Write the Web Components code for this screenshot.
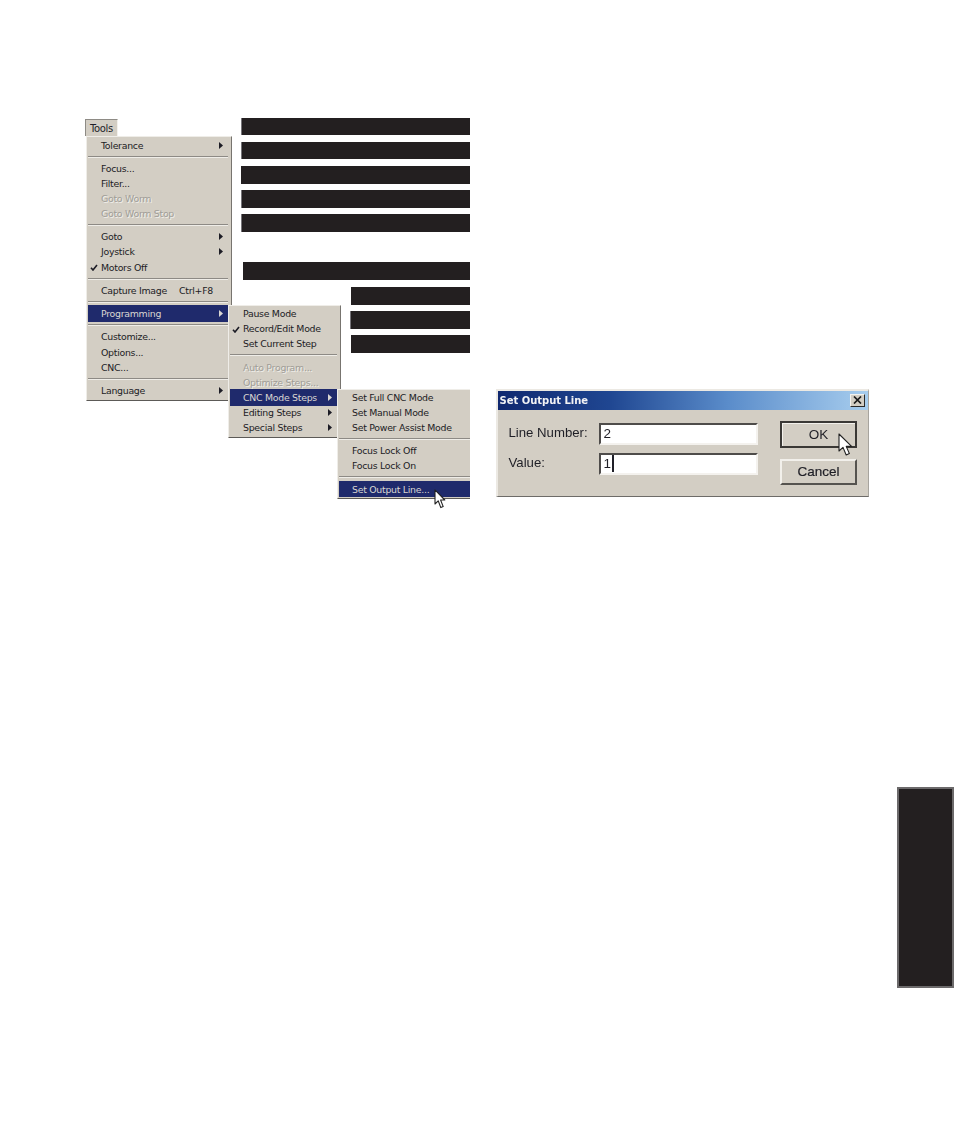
<!DOCTYPE html>
<html lang="en">
<head>
<meta charset="utf-8">
<title>Set Output Line</title>
<style>
html,body{margin:0;padding:0;background:#fff}
</style>
</head>
<body>
<manual-page>
  <menu-cascade slot="figure">
    <redact-bar w="229" h="17" edge style="margin-bottom:1px"></redact-bar>
    <redact-bar w="229" h="17" edge style="margin-bottom:1px"></redact-bar>
    <redact-bar w="229.5" h="18"></redact-bar>
    <redact-bar w="229" h="18" edge></redact-bar>
    <redact-bar w="229" h="18" edge style="margin-bottom:24px"></redact-bar>
    <redact-bar w="227" h="18" style="margin-bottom:1px"></redact-bar>
    <redact-bar w="119" h="18"></redact-bar>
    <redact-bar w="120" h="18" edge></redact-bar>
    <redact-bar w="119" h="18"></redact-bar>

    <menu-tab slot="menus">Tools</menu-tab>

    <pop-menu slot="menus" x="86" y="135.5" w="146" h="265.5" pad="1">
      <menu-row arrow>Tolerance</menu-row>
      <menu-sep></menu-sep>
      <menu-row>Focus...</menu-row>
      <menu-row>Filter...</menu-row>
      <menu-row disabled>Goto Worm</menu-row>
      <menu-row disabled>Goto Worm Stop</menu-row>
      <menu-sep></menu-sep>
      <menu-row arrow>Goto</menu-row>
      <menu-row arrow>Joystick</menu-row>
      <menu-row check>Motors Off</menu-row>
      <menu-sep></menu-sep>
      <menu-row key="Ctrl+F8">Capture Image</menu-row>
      <menu-sep></menu-sep>
      <menu-row arrow active>Programming</menu-row>
      <menu-sep></menu-sep>
      <menu-row>Customize...</menu-row>
      <menu-row>Options...</menu-row>
      <menu-row>CNC...</menu-row>
      <menu-sep></menu-sep>
      <menu-row arrow>Language</menu-row>
    </pop-menu>

    <pop-menu slot="menus" x="228" y="305" w="113" h="133" pad="0">
      <menu-row>Pause Mode</menu-row>
      <menu-row check>Record/Edit Mode</menu-row>
      <menu-row>Set Current Step</menu-row>
      <menu-sep></menu-sep>
      <menu-row disabled>Auto Program...</menu-row>
      <menu-row disabled>Optimize Steps...</menu-row>
      <menu-row arrow active>CNC Mode Steps</menu-row>
      <menu-row arrow>Editing Steps</menu-row>
      <menu-row arrow>Special Steps</menu-row>
    </pop-menu>

    <pop-menu slot="menus" x="337" y="388.5" w="133" h="110.5" pad="0" flush>
      <menu-row>Set Full CNC Mode</menu-row>
      <menu-row>Set Manual Mode</menu-row>
      <menu-row>Set Power Assist Mode</menu-row>
      <menu-sep></menu-sep>
      <menu-row>Focus Lock Off</menu-row>
      <menu-row>Focus Lock On</menu-row>
      <menu-sep></menu-sep>
      <menu-row active thin>Set Output Line...</menu-row>
    </pop-menu>

    <arrow-cursor slot="menus" x="434" y="489"></arrow-cursor>
  </menu-cascade>

  <output-dialog slot="figure"></output-dialog>
  <side-tab slot="tab"></side-tab>
</manual-page>

<script>
function shadow(el, html){
  const r = el.attachShadow({mode:'open'});
  r.innerHTML = html;
  return r;
}

customElements.define('manual-page', class extends HTMLElement{
  constructor(){super();shadow(this,`<style>
    :host{display:flex;flex-direction:column;box-sizing:border-box;width:954px;height:1138px;padding-top:118px;background:#fff;overflow:hidden}
    .figure{display:flex;align-items:flex-end}
    .tab{display:flex;justify-content:flex-end;margin-top:286px}
  </style>
  <div class="figure"><slot name="figure"></slot></div>
  <div class="tab"><slot name="tab"></slot></div>`);}
});

customElements.define('menu-cascade', class extends HTMLElement{
  constructor(){super();shadow(this,`<style>
    :host{display:block;position:relative;width:470px;height:383px;flex:none}
    .bars{display:flex;flex-direction:column;align-items:flex-end;gap:6px}
    .layer{position:absolute;left:0;top:-118px;filter:blur(.35px)}
  </style>
  <div class="bars"><slot></slot></div>
  <div class="layer"><slot name="menus"></slot></div>`);}
});

customElements.define('redact-bar', class extends HTMLElement{
  constructor(){super();shadow(this,`<style>
    :host{display:block;box-sizing:border-box;background:#231f20;flex:none}
    :host([edge]){border-left:1px solid #77757a}
  </style>`);}
  connectedCallback(){
    this.style.width=this.getAttribute('w')+'px';
    this.style.height=this.getAttribute('h')+'px';
  }
});

customElements.define('menu-tab', class extends HTMLElement{
  constructor(){super();shadow(this,`<style>
    :host{position:absolute;left:85px;top:118.5px;width:33px;height:17px;box-sizing:border-box;background:#d3cec4;
      border-top:1px solid #8e8b85;border-left:1px solid #8e8b85;border-right:1px solid #f3f1ec;
      font:10px/17px "DejaVu Sans",sans-serif;letter-spacing:-.35px;color:#1f1f28;padding-left:4px;z-index:1}
  </style><slot></slot>`);}
});

customElements.define('pop-menu', class extends HTMLElement{
  constructor(){super();shadow(this,`<style>
    :host{position:absolute;box-sizing:border-box;background:#d3cec4;display:flex;flex-direction:column;
      padding:0 3px 0 1px;border-top:1px solid #efede8;border-left:1px solid #efede8;
      border-right:1.5px solid #77746f;border-bottom:1.5px solid #5c5a57}
    :host([flush]){border-right:0;padding-right:0}
  </style><slot></slot>`);}
  connectedCallback(){
    const s=this.style,a=n=>this.getAttribute(n)+'px';
    s.left=a('x');s.top=a('y');s.width=a('w');s.height=a('h');s.paddingTop=a('pad');
  }
});

const ARROW='<svg width="4" height="7" viewBox="0 0 4 7"><path d="M0 0L4 3.5L0 7Z" fill="currentColor"/></svg>';
const CHECK='<svg width="8" height="7" viewBox="0 0 8 7"><path d="M1 3.7L3 6L7 1" fill="none" stroke="currentColor" stroke-width="1.6"/></svg>';

customElements.define('menu-row', class extends HTMLElement{
  constructor(){super();
    const key=this.getAttribute('key');
    shadow(this,`<style>
    :host{display:flex;align-items:center;height:15.1px;flex:none;position:relative;box-sizing:border-box;padding:0 5px 0 13px;
      font:9.4px/15px "DejaVu Sans",sans-serif;letter-spacing:-.28px;color:#1c1c25;white-space:nowrap}
    :host([disabled]){color:#a09d97;text-shadow:1px 1px 0 #f1efea}
    :host([active]){background:#1f2a6c;color:#d9d6d2;margin:-1px 0;height:17.1px}
    :host([thin]){margin:0;height:15.4px}
    .t{flex:1}
    .c{position:absolute;left:2px;top:50%;margin-top:-3px;display:flex}
    .a{display:flex}
    .k{margin-right:10px}
  </style>
  ${this.hasAttribute('check')?`<span class="c">${CHECK}</span>`:''}
  <span class="t"><slot></slot></span>
  ${key?`<span class="k">${key}</span>`:''}
  ${this.hasAttribute('arrow')?`<span class="a">${ARROW}</span>`:''}`);}
});

customElements.define('menu-sep', class extends HTMLElement{
  constructor(){super();shadow(this,`<style>
    :host{display:flex;align-items:center;height:8.2px;flex:none}
    i{display:block;flex:1;height:1px;background:#8d8a85;border-bottom:1px solid #efede8;margin-right:0}
  </style><i></i>`);}
});

customElements.define('arrow-cursor', class extends HTMLElement{
  constructor(){super();shadow(this,`<style>
    :host{position:absolute;display:block;width:12px;height:20px;z-index:3}
    svg{display:block}
  </style>
  <svg width="12" height="20" viewBox="0 0 12 20"><path d="M1 .8V15L4.2 11.8L6.8 18.6L9.2 17.6L6.6 11H10.8Z" fill="#fff" stroke="#222" stroke-width="1.1" stroke-linejoin="round"/></svg>`);}
  connectedCallback(){
    this.style.left=this.getAttribute('x')+'px';
    this.style.top=this.getAttribute('y')+'px';
  }
});

customElements.define('output-dialog', class extends HTMLElement{
  constructor(){super();shadow(this,`<style>
    :host{display:block;position:relative;box-sizing:border-box;flex:none;width:373.5px;height:108.5px;margin:0 0 4px 25.5px;
      background:#d3cec4;border-top:2px solid #ece9e3;border-left:2px solid #ece9e3;border-right:1px solid #a7a49e;border-bottom:1.5px solid #6d6b68;
      filter:blur(.35px);font-family:"Liberation Sans",Arial,sans-serif;color:#1f1f26}
    .title{display:flex;align-items:center;justify-content:space-between;height:19px;padding:0 3px 0 2px;
      background:linear-gradient(90deg,#10286f 0%,#1f4691 30%,#5a8cca 62%,#a7cdee 100%);
      color:#f2f2f4;font:bold 10px/19px "DejaVu Sans",sans-serif;letter-spacing:-.02px}
    .x{box-sizing:border-box;width:15px;height:13px;background:#d3cec4;border:1px solid;border-color:#f4f2ee #2b2a2a #2b2a2a #f4f2ee;display:flex;align-items:center;justify-content:center}
    .body{display:flex;justify-content:space-between;align-items:flex-start;padding:11px 11px 0 11px}
    .form{display:grid;grid-template-columns:90px 159px;row-gap:8px;align-items:center;margin-top:2px}
    .label{font-size:13.2px;line-height:20px;margin-bottom:2px}
    .field{box-sizing:border-box;height:22px;background:#fff;border:2px solid;border-color:#4e4c4a #f4f2ee #f4f2ee #4e4c4a;
      font-size:13.5px;line-height:19px;padding-left:3px;display:flex;align-items:center}
    .caret{display:inline-block;width:1.5px;height:17px;background:#1f1f28;margin-left:1px}
    .btns{display:flex;flex-direction:column;gap:11px}
    .btn{box-sizing:border-box;width:77px;height:26.5px;background:#d3cec4;display:flex;align-items:center;justify-content:center;
      font-size:13.5px;border:2px solid;border-color:#f2f0eb #55534f #55534f #f2f0eb}
    .btn.def{border-color:#3a3835;height:27px;box-shadow:inset 1px 1px 0 #f2f0eb}
    .btn.cancel{-webkit-text-stroke:.2px #1f1f26}
    .cur{position:absolute;left:340.5px;top:42px}
  </style>
  <div class="title"><span>Set Output Line</span>
    <span class="x"><svg width="9" height="8" viewBox="0 0 9 8"><path d="M1 .5L8 7.5M8 .5L1 7.5" stroke="#1b1b1b" stroke-width="1.7"/></svg></span></div>
  <div class="body">
    <div class="form">
      <span class="label">Line Number:</span><span class="field">2</span>
      <span class="label">Value:</span><span class="field">1<i class="caret"></i></span>
    </div>
    <div class="btns">
      <span class="btn def">OK</span>
      <span class="btn cancel">Cancel</span>
    </div>
  </div>
  <svg class="cur" width="16" height="24" viewBox="0 0 16 24"><path d="M1 1V18L5 14.4L8.2 22L11.4 20.6L8.2 13.4H13.6Z" fill="#fff" stroke="#222" stroke-width="1.1" stroke-linejoin="round"/></svg>`);}
});

customElements.define('side-tab', class extends HTMLElement{
  constructor(){super();shadow(this,`<style>
    :host{display:block;box-sizing:border-box;width:57px;height:200.5px;background:#231f20;border:2px solid #6c6a6b;margin-right:0}
  </style>`);}
});
</script>
</body>
</html>
